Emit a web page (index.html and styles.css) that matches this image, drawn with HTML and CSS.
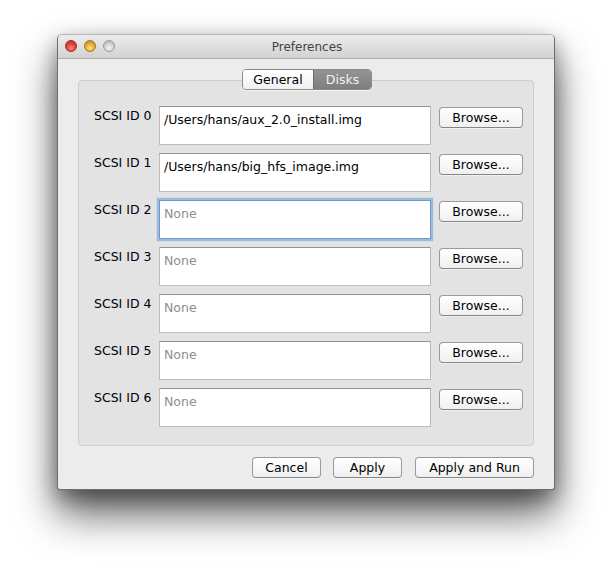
FILE: index.html
```html
<!DOCTYPE html>
<html>
<head>
<meta charset="utf-8">
<title>Preferences</title>
<link rel="stylesheet" href="styles.css">
</head>
<body>
<div class="window">
  <div class="titlebar">
    <div class="lights">
      <span class="light red"></span>
      <span class="light yellow"></span>
      <span class="light gray"></span>
    </div>
    <div class="title">Preferences</div>
  </div>
  <div class="content">
    <div class="box">
      <div class="tabs">
        <div class="tab">General</div>
        <div class="tab selected">Disks</div>
      </div>
      <div class="row">
        <div class="label">SCSI ID 0</div>
        <div class="field">/Users/hans/aux_2.0_install.img</div>
        <div class="btn browse">Browse...</div>
      </div>
      <div class="row">
        <div class="label">SCSI ID 1</div>
        <div class="field">/Users/hans/big_hfs_image.img</div>
        <div class="btn browse">Browse...</div>
      </div>
      <div class="row">
        <div class="label">SCSI ID 2</div>
        <div class="field focus placeholder">None</div>
        <div class="btn browse">Browse...</div>
      </div>
      <div class="row">
        <div class="label">SCSI ID 3</div>
        <div class="field placeholder">None</div>
        <div class="btn browse">Browse...</div>
      </div>
      <div class="row">
        <div class="label">SCSI ID 4</div>
        <div class="field placeholder">None</div>
        <div class="btn browse">Browse...</div>
      </div>
      <div class="row">
        <div class="label">SCSI ID 5</div>
        <div class="field placeholder">None</div>
        <div class="btn browse">Browse...</div>
      </div>
      <div class="row">
        <div class="label">SCSI ID 6</div>
        <div class="field placeholder">None</div>
        <div class="btn browse">Browse...</div>
      </div>
    </div>
    <div class="actions">
      <div class="btn cancel">Cancel</div>
      <div class="btn apply">Apply</div>
      <div class="btn run">Apply and Run</div>
    </div>
  </div>
</div>
</body>
</html>
```

FILE: styles.css
```css
html, body {
  margin: 0;
  padding: 0;
  background: #ffffff;
}
body {
  font-family: "DejaVu Sans", "Liberation Sans", sans-serif;
  font-size: 12.5px;
  color: #000000;
  padding: 34px 0 0 57px;
  min-height: 569px;
  box-sizing: border-box;
}
.window {
  width: 498px;
  height: 456px;
  box-sizing: border-box;
  background: #ececec;
  border: 1px solid #6e6e6e;
  border-top-color: #b5b5b5;
  border-radius: 5px 5px 3px 3px;
  box-shadow: 0 24px 42px rgba(0, 0, 0, 0.62), 0 8px 20px rgba(0, 0, 0, 0.35);
  overflow: hidden;
}
.titlebar {
  height: 23px;
  position: relative;
  background: linear-gradient(#ececec, #d2d2d2);
  border-bottom: 1px solid #b0b0b0;
  display: flex;
  align-items: center;
  justify-content: center;
}
.lights {
  position: absolute;
  left: 7px;
  top: 5px;
  display: flex;
  gap: 7px;
}
.light {
  width: 12px;
  height: 12px;
  border-radius: 50%;
  box-sizing: border-box;
}
.red {
  background: radial-gradient(circle at 50% 70%, #ff8a80 0%, #e0443e 45%, #b02a25 100%);
  border: 1px solid #9e2f2a;
}
.yellow {
  background: radial-gradient(circle at 50% 70%, #ffe27a 0%, #e9a93a 50%, #b8791c 100%);
  border: 1px solid #a5771f;
}
.gray {
  background: radial-gradient(circle at 50% 70%, #f4f4f4 0%, #d2d2d2 50%, #a9a9a9 100%);
  border: 1px solid #9a9a9a;
}
.title {
  font-size: 12px;
  color: #444444;
  margin-left: 2px;
}
.content {
  padding: 21px 20px 0 20px;
}
.box {
  position: relative;
  height: 366px;
  box-sizing: border-box;
  background: #e3e3e3;
  border: 1px solid #cdcdcd;
  border-radius: 4px;
  padding: 25px 0 0 15px;
  display: flex;
  flex-direction: column;
  gap: 8px;
}
.tabs {
  position: absolute;
  top: -12px;
  left: 163px;
  display: flex;
  height: 21px;
  box-sizing: border-box;
  border: 1px solid #8a8a8a;
  border-radius: 4px;
  overflow: hidden;
  box-shadow: 0 1px 0 rgba(255, 255, 255, 0.6);
}
.tab {
  display: flex;
  align-items: center;
  justify-content: center;
  height: 19px;
  background: linear-gradient(#ffffff, #f1f1f1);
  color: #000000;
}
.tab:first-child {
  width: 70px;
}
.tab.selected {
  width: 57px;
  background: linear-gradient(#949494, #7e7e7e);
  color: #f2f2f2;
  border-left: 1px solid #6a6a6a;
}
.row {
  display: flex;
  align-items: flex-start;
}
.label {
  width: 65px;
  flex: none;
  padding-top: 2px;
  line-height: 16px;
}
.field {
  width: 272px;
  height: 39px;
  flex: none;
  box-sizing: border-box;
  background: #ffffff;
  border: 1px solid #bcbcbc;
  border-top-color: #919191;
  padding: 5px 4px 0 4px;
  line-height: 16px;
  color: #000000;
  white-space: nowrap;
  overflow: hidden;
}
.field.placeholder {
  color: #8e8e8e;
}
.field.focus {
  border-color: #6e98d0;
  box-shadow: 0 0 1px 2px rgba(111, 157, 219, 0.6);
}
.btn {
  height: 21px;
  box-sizing: border-box;
  display: flex;
  align-items: center;
  justify-content: center;
  background: linear-gradient(#ffffff, #f0f0f0);
  border: 1px solid #9a9a9a;
  border-bottom-color: #858585;
  border-radius: 4px;
  box-shadow: 0 1px 0 rgba(255, 255, 255, 0.5);
  color: #000000;
  flex: none;
}
.browse {
  width: 84px;
  margin-left: 8px;
  margin-top: 1px;
}
.actions {
  display: flex;
  justify-content: flex-end;
  margin-top: 11px;
}
.cancel {
  width: 69px;
}
.apply {
  width: 69px;
  margin-left: 12px;
}
.run {
  width: 119px;
  margin-left: 13px;
}
```
